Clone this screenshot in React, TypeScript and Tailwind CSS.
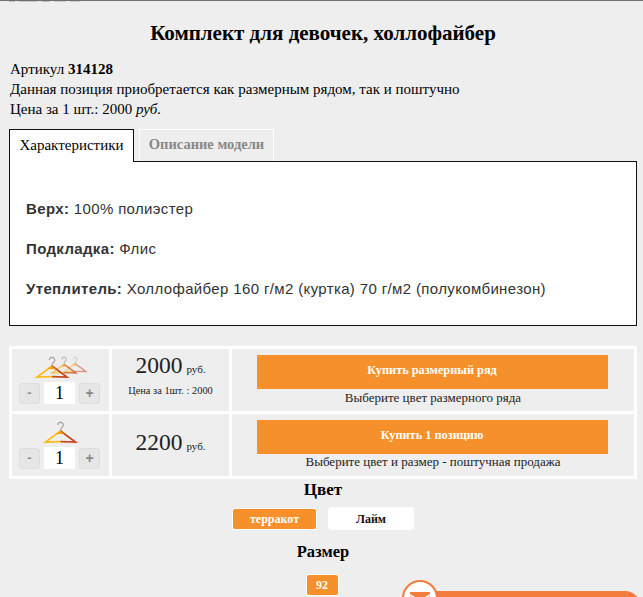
import React from "react";

const serif = "font-['Liberation_Serif',serif]";

function Hanger({ cx, top, w, o = 1 }: { cx: number; top: number; w: number; o?: number }) {
  const s = w / 30;
  return (
    <g transform={`translate(${cx} ${top}) scale(${s})`} opacity={o}>
      <path d="M-2.6 3 a2.7 2.7 0 1 1 4.2 2.2 q-1.6 1 -1.6 3.8" fill="none" stroke="#aaa69f" strokeWidth="1.3" />
      <path d="M0 9 L-15 20 L0 19.6" fill="none" stroke="#fdbb1a" strokeWidth="1.7" />
      <path d="M0 9 L15 20 L0 19.6" fill="none" stroke="#c9471a" strokeWidth="1.7" />
      <path d="M-4 12 L0 9 L4 12 Z" fill="#f59b12" />
    </g>
  );
}

function Stepper() {
  return (
    <div className="flex items-center justify-center gap-[4px] mr-[2px]">
      <div className="w-[21px] h-[21px] rounded-[3px] border border-[#ddd] bg-[#e6e6e6] flex items-center justify-center text-[#888] text-[13px] font-bold font-['Liberation_Sans',sans-serif]">-</div>
      <div className={`w-[31px] h-[22px] bg-white flex items-center justify-center text-[18px] text-black ${serif}`}>1</div>
      <div className="w-[21px] h-[21px] rounded-[3px] border border-[#ddd] bg-[#e6e6e6] flex items-center justify-center text-[#888] text-[14px] font-bold font-['Liberation_Sans',sans-serif]">+</div>
    </div>
  );
}

export default function App() {
  return (
    <div className={`w-[643px] h-[597px] overflow-hidden bg-[#eeeeee] text-[#111] relative ${serif}`}>
      <div className="h-px bg-[#6f6f6f]" />
      <div className="h-px flex gap-[4px] ml-[9px]">
        <div className="w-[6px] bg-[#c4c4c4]" />
        <div className="w-[19px] bg-[#c8c8c8]" />
        <div className="w-[8px] bg-[#bbb]" />
        <div className="w-[12px] bg-[#ccc]" />
        <div className="w-[10px] bg-[#ccc]" />
      </div>
      <h1 className="mt-[17px] pl-[3px] text-center text-[21px] leading-[28px] font-bold text-black">Комплект для девочек, холлофайбер</h1>
      <div className="mt-[12px] ml-[10px] text-[15px] leading-[20px] text-black">
        <div>Артикул <b>314128</b></div>
        <div>Данная позиция приобретается как размерным рядом, так и поштучно</div>
        <div>Цена за 1 шт.: 2000 <i>руб.</i></div>
      </div>
      <div className="mt-[10px] ml-[9px] flex gap-[5px] relative z-10">
        <div className="w-[125px] h-[33px] -mb-px border border-b-0 border-[#111] bg-white flex items-center justify-center text-[15px] text-black pb-[2px]">Характеристики</div>
        <div className="w-[135px] h-[32px] border border-b-0 border-white flex items-center justify-center text-[14.5px] font-bold text-[#888] pb-[2px]">Описание модели</div>
      </div>
      <div className="mx-[9px] w-[628px] h-[165px] border border-[#111] bg-white pl-[16px] pt-[37px] font-['Liberation_Sans',sans-serif] text-[15px] tracking-[0.36px] leading-[20px] text-[#333] flex flex-col gap-[20px]">
        <div><b>Верх:</b> 100% полиэстер</div>
        <div><b>Подкладка:</b> Флис</div>
        <div><b>Утеплитель:</b> Холлофайбер 160 г/м2 (куртка) 70 г/м2 (полукомбинезон)</div>
      </div>

      <div className="mt-[20px] ml-[9px] w-[628px] bg-white p-[3px] grid grid-cols-[97px_117px_402px] grid-rows-[62px_62px] gap-[3px]">
        <div className="bg-[#eeeeee] flex flex-col items-center pt-[5px]">
          <svg width="60" height="28" viewBox="0 0 60 28" className="shrink-0 mr-[1px]">
            <Hanger cx={45} top={3} w={22} o={0.55} />
            <Hanger cx={34} top={3} w={24} o={0.8} />
            <Hanger cx={22} top={3} w={30} />
          </svg>
          <Stepper />
        </div>
        <div className="bg-[#eeeeee] flex flex-col items-center pt-[3px] text-[#222]">
          <div className="leading-[26px]"><span className="text-[23.5px]">2000</span> <span className="text-[11px]">руб.</span></div>
          <div className="mt-[2px] text-[10.4px] leading-[14px]">Цена за 1шт. : 2000</div>
        </div>
        <div className="bg-[#eeeeee] flex flex-col items-center pt-[6px]">
          <div className="w-[351px] h-[34px] mr-[2px] pb-[3px] bg-[#f6902a] text-white font-bold text-[12.3px] flex items-center justify-center">Купить размерный ряд</div>
          <div className="text-[13px] leading-[16px] mt-[1px] text-[#222]">Выберите цвет размерного ряда</div>
        </div>
        <div className="bg-[#eeeeee] flex flex-col items-center pt-[5px]">
          <svg width="60" height="28" viewBox="0 0 60 28" className="shrink-0 mr-[1px]">
            <Hanger cx={30.5} top={3} w={30} />
          </svg>
          <Stepper />
        </div>
        <div className="bg-[#eeeeee] flex flex-col items-center pt-[15px] text-[#222]">
          <div className="leading-[26px]"><span className="text-[23.5px]">2200</span> <span className="text-[11px]">руб.</span></div>
        </div>
        <div className="bg-[#eeeeee] flex flex-col items-center pt-[6px]">
          <div className="w-[351px] h-[34px] mr-[2px] pb-[3px] bg-[#f6902a] text-white font-bold text-[12.3px] flex items-center justify-center">Купить 1 позицию</div>
          <div className="text-[13px] leading-[16px] text-[#222]">Выберите цвет и размер - поштучная продажа</div>
        </div>
      </div>

      <div className="w-[643px] pl-[3px] flex flex-col items-center">
        <div className="mt-0 text-[17px] leading-[22px] font-bold text-black">Цвет</div>
        <div className="mt-[6px] flex items-center gap-[11px]">
          <div className="w-[85px] h-[22px] rounded-[3px] border border-white bg-[#f6902a] text-white font-bold text-[12px] flex items-center justify-center">терракот</div>
          <div className="w-[86px] h-[23px] rounded-[4px] bg-white text-[#111] font-bold text-[12px] flex items-center justify-center">Лайм</div>
        </div>
        <div className="mt-[10px] text-[16.5px] leading-[24px] font-bold text-black">Размер</div>
        <div className="mt-[10px] mr-[2px] w-[33px] h-[22px] rounded-[3px] border border-white bg-[#f6902a] text-white font-bold text-[12px] flex items-center justify-center">92</div>
      </div>

      <div className="absolute left-[402px] top-[580px] w-[36px] h-[36px] rounded-full bg-white border-[2px] border-[#f47c3c] z-10 flex justify-center pt-[10px]">
        <svg width="20" height="14" viewBox="0 0 20 14"><path d="M0 0h20v2L10 8 0 2z" fill="#f47c3c" /><path d="M0 4l10 6 10-6v10H0z" fill="#f47c3c" /></svg>
      </div>
      <div className="absolute left-[436px] top-[591px] w-[205px] h-[30px] rounded-tr-[16px] bg-[#f47c3c]" />
    </div>
  );
}
